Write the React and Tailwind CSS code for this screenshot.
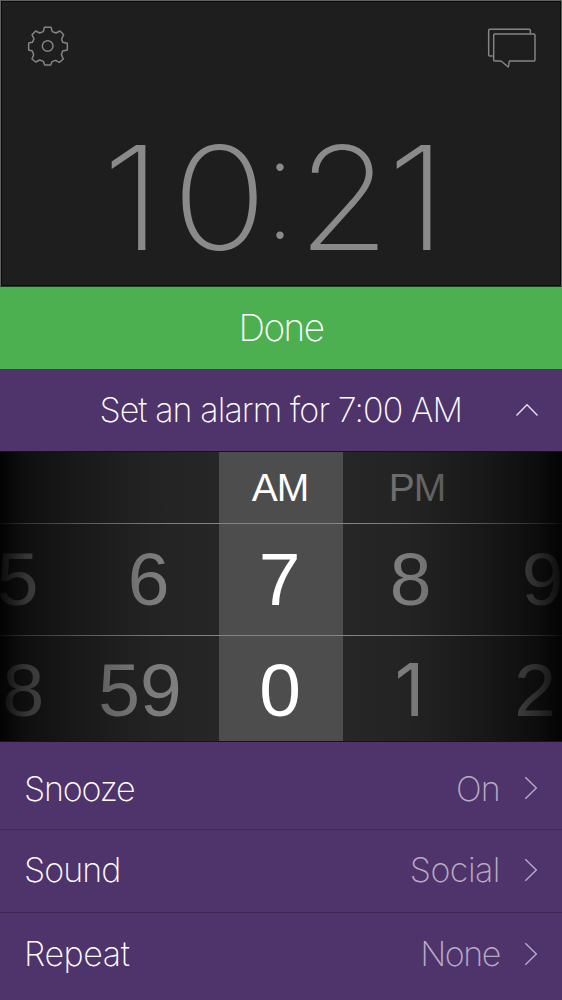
import clsx from 'clsx';

const hours = [
  { label: '5', cell: 'w-[131px] -ml-[48px]' },
  { label: '6', cell: 'w-[131px]' },
  { label: '7', cell: 'w-[131px]', active: true },
  { label: '8', cell: 'w-[131px]' },
  { label: '9', cell: 'w-[133px]' },
];

const minutes = [
  { label: '58', cell: 'w-[137px] -ml-[66px]' },
  { label: '59', cell: 'w-[138px]' },
  { label: '0', cell: 'w-[142px]', active: true },
  { label: '1', cell: "w-[117px] font-['Inter',sans-serif] text-[73px]" },
  { label: '2', cell: 'w-[134px]' },
];

const settings = [
  { name: 'Snooze', value: 'On', row: 'h-[88px] pt-[5px]', nameCls: 'tracking-[-1.2px]', valueCls: 'tracking-[-0.8px]' },
  { name: 'Sound', value: 'Social', row: 'h-[83px] pb-[3px]', nameCls: 'tracking-[-0.9px]', valueCls: 'tracking-[-0.5px]' },
  { name: 'Repeat', value: 'None', row: 'h-[87px] pb-[6px]', nameCls: 'tracking-[-0.4px]', valueCls: 'tracking-[-1.4px]' },
];

function GearIcon() {
  return (
    <svg width="42" height="42" viewBox="81 75 126 126" fill="none" stroke="#858585" strokeWidth="4.4" strokeLinejoin="round">
      <path d="M133 82h20l4 13 11 4 12-6 11 11-6 13 3 10 14 3v20l-14 3-4 11 6 13-12 10-11-6-11 4-4 10h-18l-4-11-11-4-12 6-11-9 5-13-4-11-11-3v-21l11-2 5-10-6-13 11-11 12 6 11-4z" />
      <circle cx="143" cy="138" r="16" />
    </svg>
  );
}

function ChatIcon() {
  return (
    <svg width="50" height="43" viewBox="75 75 150 129" fill="none" stroke="#858585" strokeWidth="4.4" strokeLinejoin="round">
      <path d="M92 168h-9q-3 0-3-3V91q0-3 3-3h119q3 0 3 3v10" />
      <path d="M98 102h117q4 0 4 4v74q0 3-3 3h-74l-3 18-22-18H98q-3 0-3-3v-75q0-3 3-3z" />
    </svg>
  );
}

function Chevron({ up }) {
  return up ? (
    <svg width="24" height="14" viewBox="0 0 24 14" fill="none" stroke="#e6e0ec" strokeWidth="1.4">
      <path d="M1.500 12.500 12 1.800l10.500 10.700" />
    </svg>
  ) : (
    <svg width="14" height="24" viewBox="0 0 14 24" fill="none" stroke="#b7abc4" strokeWidth="1.4">
      <path d="M1.300 1.200 12.300 12 1.300 22.800" />
    </svg>
  );
}

function Wheel({ items }) {
  return (
    <div className="flex h-full items-baseline pt-[18px] text-[75px] leading-[75px]">
      {items.map((item) => (
        <span key={item.label} className={clsx('shrink-0 text-center', item.cell, item.active ? 'text-white' : 'text-[#868686]')}>
          {item.label}
        </span>
      ))}
    </div>
  );
}

export default function App() {
  return (
    <div className="flex h-[1000px] w-[562px] flex-col overflow-hidden bg-[#4e346b] font-['Inter',sans-serif] font-extralight">
      <header className="h-[287px] shrink-0 border border-[#5f635f] border-b-[#1f3d20] bg-[#1e1e1e] inset-shadow-[0_0_0_1px_#0c0c0c]">
        <div className="flex justify-between pl-[26px] pr-[24px] pt-[24px]">
          <GearIcon />
          <ChatIcon />
        </div>
        <div className="mt-[58px] flex pl-[87px] text-[144px] leading-[144px] text-[#8a8a8a]">
          <span className="w-[88px] scale-x-110 text-center">1</span>
          <span className="w-[85px] scale-x-110 text-center">0</span>
          <span className="flex w-[38px] -translate-y-[12px] justify-center font-thin">:</span>
          <span className="w-[78px] scale-x-104 text-center">2</span>
          <span className="w-[80px] scale-x-110 text-center">1</span>
        </div>
      </header>

      <button className="h-[82px] shrink-0 bg-[#4caf50] text-[37px] tracking-[-1.500px] text-white">Done</button>

      <div className="flex h-[82px] shrink-0 items-center justify-end pr-[23px] text-white">
        <span className="mr-[53px] pb-[2px] text-[34px] tracking-[-0.900px]">Set an alarm for 7:00 AM</span>
        <Chevron up />
      </div>

      <section className="relative flex h-[291px] shrink-0 flex-col overflow-hidden border-y border-[#171319] bg-[#262626] font-['Liberation_Sans',sans-serif] font-normal">
        <div className="absolute inset-y-0 left-[219px] w-[124px] bg-[#4d4d4d]" />
        <div className="relative flex h-[72px] shrink-0 items-center border-b border-[#858585] pt-px text-[39px]">
          <span className="ml-[214px] w-[132px] text-center tracking-[-1px] text-white">AM</span>
          <span className="w-[142px] text-center tracking-[-1px] text-[#757575]">PM</span>
        </div>
        <div className="relative h-[112px] shrink-0 border-b border-[#858585]">
          <Wheel items={hours} />
        </div>
        <div className="relative -mt-[2px] h-[107px] shrink-0">
          <Wheel items={minutes} />
        </div>
        <div className="absolute inset-y-0 left-0 w-[219px] bg-[linear-gradient(to_right,rgba(0,0,0,.92),rgba(0,0,0,.6)_12%,rgba(0,0,0,.36)_35%,rgba(0,0,0,.08)_70%,transparent)]" />
        <div className="absolute inset-y-0 right-0 w-[219px] bg-[linear-gradient(to_left,rgba(0,0,0,.92),rgba(0,0,0,.66)_12%,rgba(0,0,0,.38)_35%,rgba(0,0,0,.08)_70%,transparent)]" />
      </section>

      <section className="divide-y divide-[#3f2a57]">
        {settings.map((s) => (
          <div key={s.name} className={clsx('flex items-center pl-[24px] pr-[24px] text-[34px]', s.row)}>
            <span className={clsx('text-white', s.nameCls)}>{s.name}</span>
            <span className={clsx('ml-auto mr-[24px] text-[#b7abc4]', s.valueCls)}>{s.value}</span>
            <Chevron />
          </div>
        ))}
      </section>
    </div>
  );
}
